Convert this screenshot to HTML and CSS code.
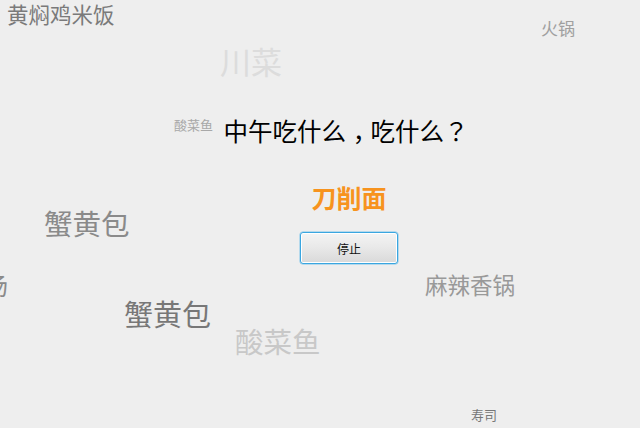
FILE: index.html
```html
<!DOCTYPE html>
<html lang="zh">
<head>
<meta charset="utf-8">
<title>中午吃什么</title>
<link rel="stylesheet" href="styles.css">
</head>
<body>
<div class="stage">
  <span class="word w1">黄焖鸡米饭</span>
  <span class="word w2">川菜</span>
  <span class="word w3">酸菜鱼</span>
  <span class="word w4">火锅</span>
  <span class="word w5">蟹黄包</span>
  <span class="word w6">汤</span>
  <span class="word w7">蟹黄包</span>
  <span class="word w8">酸菜鱼</span>
  <span class="word w9">麻辣香锅</span>
  <span class="word w10">寿司</span>
  <main class="center">
    <h1 class="title">中午吃什么<span class="comma">，</span>吃什么<span class="punct" lang="zh-TW">？</span></h1>
    <div class="result">刀削面</div>
    <button class="btn" type="button">停止</button>
  </main>
</div>
</body>
</html>
```
FILE: styles.css
```css
html, body {
  margin: 0;
  padding: 0;
  background: #eeeeee;
}
body {
  font-family: "Noto Sans CJK SC", "Noto Sans", sans-serif;
}
.stage {
  position: relative;
  width: 640px;
  height: 428px;
  overflow: hidden;
}
.word {
  position: absolute;
  line-height: 1;
  white-space: nowrap;
}
.w1 { left: 7px; top: 3px; font-size: 21.5px; color: #7a7a7a; }
.w2 { left: 220px; top: 45px; font-size: 31px; color: #dcdcdc; }
.w3 { left: 174px; top: 118px; font-size: 13px; color: #a8a8a8; }
.w4 { left: 541px; top: 19px; font-size: 17px; color: #a0a0a0; }
.w5 { left: 44px; top: 209px; font-size: 28.5px; color: #8a8a8a; }
.w6 { left: -16px; top: 273px; font-size: 24px; color: #8a8a8a; }
.w7 { left: 124px; top: 299px; font-size: 29px; color: #777777; }
.w8 { left: 235px; top: 327px; font-size: 28.5px; color: #c8c8c8; }
.w9 { left: 425px; top: 273px; font-size: 22.5px; color: #999999; }
.w10 { left: 471px; top: 408px; font-size: 13px; color: #777777; }

.center {
  position: relative;
  display: flex;
  flex-direction: column;
  align-items: center;
  padding: 116px 0 0 58px;
}
.title {
  margin: 0 0 0 -6px;
  font-size: 24.5px;
  font-weight: normal;
  line-height: 30px;
  color: #000000;
}
.comma {
  padding-left: 0.28em;
  letter-spacing: -0.28em;
}
.punct {
  font-family: "Noto Sans CJK TC", sans-serif;
}
.result {
  margin-top: 36px;
  font-size: 25px;
  font-weight: bold;
  line-height: 30px;
  color: #f7931e;
}
.btn {
  margin-top: 20px;
  width: 98px;
  height: 32px;
  border: 1px solid #3aa6e0;
  border-radius: 3px;
  box-shadow: inset 0 0 0 1px #ffffff, 0 0 0 0.5px #7cc4ea;
  background: linear-gradient(#f4f4f4, #e8e8e8 50%, #d9d9d9);
  font-family: "Noto Sans CJK SC", sans-serif;
  font-size: 12px;
  color: #111111;
  padding: 0;
}
```
